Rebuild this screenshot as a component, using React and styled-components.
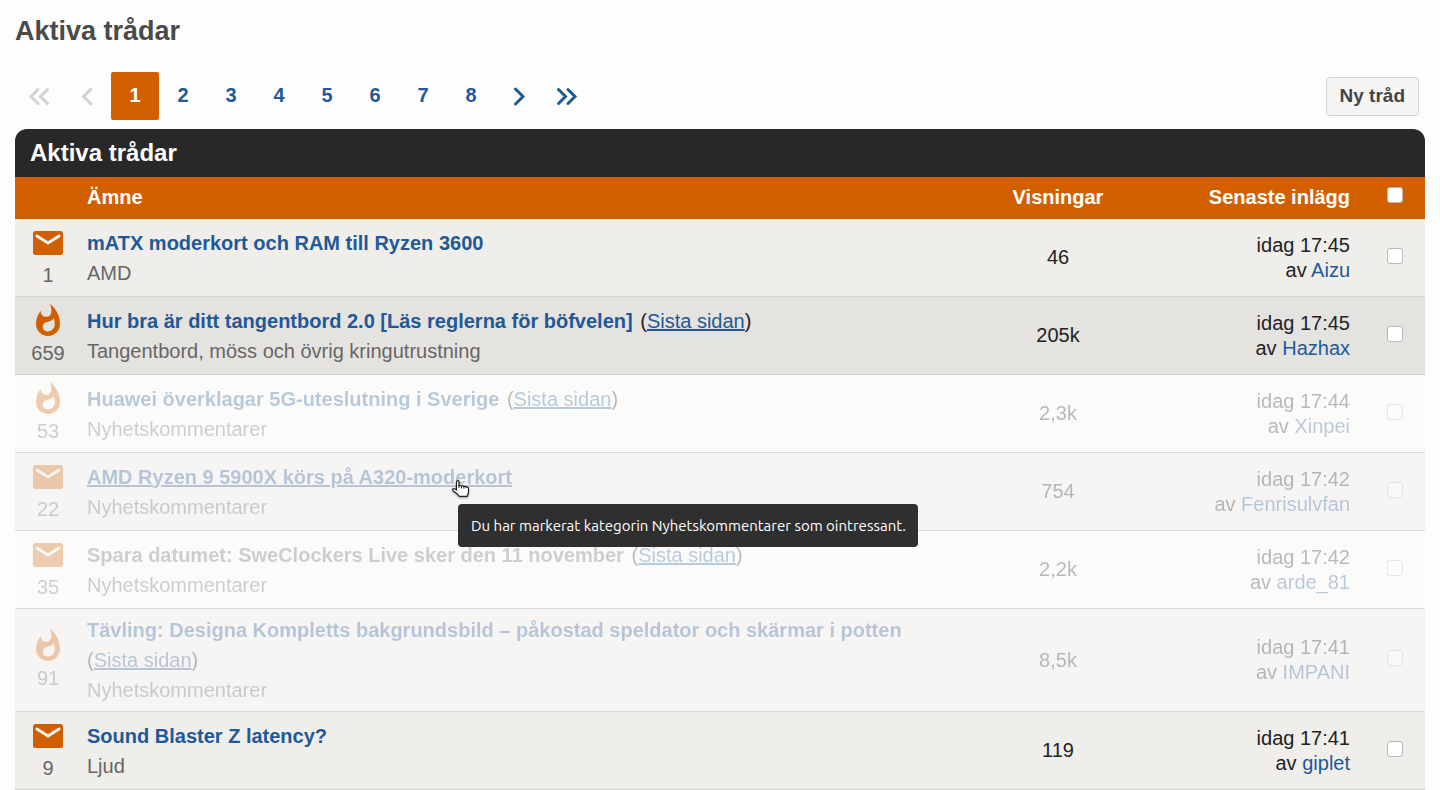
import React from 'react';
import styled, { createGlobalStyle, css } from 'styled-components';

const color = {
  orange: '#d15f00',
  blue: '#1f5998',
  dark: '#282828',
  text: '#222222',
  muted: '#666666',
};

const GlobalStyle = createGlobalStyle`
  *, *::before, *::after { box-sizing: border-box; }
  body {
    margin: 0;
    background: #fdfdfd;
    color: ${color.text};
    font: 20px/25px "Liberation Sans", Arial, Helvetica, sans-serif;
  }
`;

const Page = styled.main`
  padding: 0 15px;
`;

const PageTitle = styled.h1`
  margin: 0 0 10px;
  color: #4a4a4a;
  font-size: 27px;
  line-height: 62px;
`;

const Toolbar = styled.div`
  display: flex;
  align-items: center;
  justify-content: space-between;
  padding-right: 6px;
  margin-bottom: 9px;
`;

const Pagination = styled.nav`
  display: flex;
`;

const PageLink = styled.a`
  display: flex;
  align-items: center;
  justify-content: center;
  width: 48px;
  height: 48px;
  padding-bottom: 2px;
  border-radius: 2px;
  font-weight: bold;
  text-decoration: none;
  color: ${(p) => (p.$disabled ? '#d3d2d0' : p.$current ? '#ffffff' : color.blue)};
  background: ${(p) => (p.$current ? color.orange : 'transparent')};
`;

const NewThreadButton = styled.button`
  height: 39px;
  padding: 0 13px;
  border: 1px solid #d5d4d2;
  border-radius: 4px;
  background: #f7f5f4;
  color: #444444;
  font: bold 19px/24px "Liberation Sans", Arial, sans-serif;
  cursor: pointer;
`;

const Panel = styled.section`
  border-radius: 12px 12px 0 0;
  background: ${color.dark};
`;

const PanelTitle = styled.h2`
  margin: 0;
  padding: 0 15px;
  color: #ffffff;
  font-size: 24px;
  line-height: 48px;
`;

const ThreadTable = styled.table`
  width: 100%;
  table-layout: fixed;
  border-collapse: separate;
  border-spacing: 0;
`;

const HeadCell = styled.th`
  height: 42px;
  width: ${(p) => p.$width || 'auto'};
  padding: 0 ${(p) => p.$right || '0'} 2px ${(p) => p.$left || '0'};
  background: ${color.orange};
  color: #ffffff;
  text-align: ${(p) => p.$align || 'left'};
  vertical-align: middle;
`;

const rowBackground = {
  odd: '#f0eeeb',
  even: '#e5e3e0',
  oddFaded: '#fbfbf9',
  evenFaded: '#f7f5f4',
};

const Row = styled.tr`
  background: ${(p) => rowBackground[(p.$even ? 'even' : 'odd') + (p.$faded ? 'Faded' : '')]};
`;

const Cell = styled.td`
  position: relative;
  padding: 6px ${(p) => p.$right || '0'} 6px ${(p) => p.$left || '0'};
  border-bottom: 1px solid ${(p) => (p.$faded ? '#dadada' : '#d3d2cf')};
  text-align: ${(p) => p.$align || 'left'};
  vertical-align: middle;
`;

const CellBody = styled.div`
  ${(p) => p.$faded && css`opacity: 0.3;`}
`;

const StatusBody = styled(CellBody)`
  display: flex;
  flex-direction: column;
  align-items: center;
  color: ${color.muted};
  line-height: 29px;
`;

const TopicBody = styled(CellBody)`
  line-height: 30px;
`;

const TopicLink = styled.a`
  margin-right: 2px;
  color: ${(p) => (p.$visited ? color.muted : color.blue)};
  font-weight: bold;
  text-decoration: ${(p) => (p.$hovered ? 'underline' : 'none')};
`;

const LastPage = styled.span`
  white-space: nowrap;
  a { color: ${color.blue}; }
`;

const Category = styled.div`
  color: ${color.muted};
`;

const UserLink = styled.a`
  color: ${color.blue};
  text-decoration: none;
`;

const Checkbox = styled.input`
  appearance: none;
  display: block;
  width: 16px;
  height: 16px;
  margin: 0 auto 4px;
  border: 1px solid #b9b9b9;
  border-radius: 3px;
  background: #ffffff;
  &:checked { background: ${color.blue}; }
`;

const Tooltip = styled.div`
  position: absolute;
  z-index: 2;
  top: 51px;
  left: 377px;
  padding: 9px 12px 9px 13px;
  border-radius: 4px;
  background: rgba(34, 34, 34, 0.94);
  color: #ffffff;
  font: 15px/25px Ubuntu, "Noto Sans", sans-serif;
  white-space: nowrap;
`;

const Pointer = styled.svg`
  position: absolute;
  z-index: 3;
  top: 26px;
  left: 370px;
  filter: drop-shadow(0 1px 1px rgba(0, 0, 0, 0.35));
`;

const chevronPaths = {
  first: 'M11 5.5 4 12.5l7 7M20.500 5.500l-7 7 7 7',
  previous: 'M16 5l-7.500 7.500L16 20',
  next: 'M8.500 5l7.500 7.500L8.500 20',
  last: 'M3.500 5.500l7 7-7 7M13 5.500l7 7-7 7',
};

function Chevron({ kind }) {
  return (
    <svg width="24" height="24" viewBox="0 -1 24 24" fill="none" stroke="currentColor" strokeWidth="3" aria-hidden="true">
      <path d={chevronPaths[kind]} strokeLinecap="round" />
    </svg>
  );
}

function MailIcon() {
  return (
    <svg width="36" height="36" viewBox="0 0 36 36" aria-hidden="true">
      <rect x="3" y="6" width="30" height="24" rx="2.500" fill={color.orange} />
      <path d="M6.900 11 18 18l11.100-7" fill="none" stroke="#f7f5f3" strokeWidth="2.800" strokeLinecap="round" />
    </svg>
  );
}

function FireIcon() {
  return (
    <svg width="36" height="36" viewBox="0 0 24 24" fill={color.orange} aria-hidden="true">
      <path d="M13.5.67s.74 2.65.74 4.8c0 2.06-1.35 3.73-3.41 3.73-2.07 0-3.63-1.67-3.63-3.73l.03-.36C5.21 7.51 4 10.62 4 14c0 4.42 3.58 8 8 8s8-3.58 8-8C20 8.61 17.41 3.8 13.5.67zM11.71 19c-1.78 0-3.22-1.4-3.22-3.14 0-1.62 1.05-2.76 2.81-3.12 1.77-.36 3.6-1.21 4.62-2.58.39 1.29.59 2.65.59 4.04 0 2.65-2.15 4.8-4.8 4.8z" />
    </svg>
  );
}

function HandPointer() {
  return (
    <Pointer width="20" height="20" viewBox="0 0 20 20" aria-hidden="true">
      <path
        d="M5.500 2.500c0-1.300 2.500-1.300 2.500 0v4.300c.5-.7 2.300-.6 2.500.4.600-.7 2.200-.5 2.400.5.700-.6 2.100-.4 2.300.6.900-.5 2.300-.1 2.300 1.200v3.500c0 2-1 2.700-1.300 4.300H8.300C7.500 15.500 4.500 13.800 2 11.700.8 10.500 2.200 9 3.600 9.800l1.900 1.300z"
        fill="#ffffff"
        stroke="#222222"
        strokeWidth="1.200"
        strokeLinejoin="round"
      />
      <path d="M8 6.500v2.500M10.500 7.200v2.200M12.900 7.700v2" stroke="#222222" fill="none" />
    </Pointer>
  );
}

const threads = [
  { icon: 'mail', count: '1', title: 'mATX moderkort och RAM till Ryzen 3600', category: 'AMD', views: '46', time: '17:45', user: 'Aizu' },
  { icon: 'fire', count: '659', title: 'Hur bra är ditt tangentbord 2.0 [Läs reglerna för böfvelen]', lastPage: true, category: 'Tangentbord, möss och övrig kringutrustning', views: '205k', time: '17:45', user: 'Hazhax' },
  { icon: 'fire', count: '53', title: 'Huawei överklagar 5G-uteslutning i Sverige', lastPage: true, category: 'Nyhetskommentarer', views: '2,3k', time: '17:44', user: 'Xinpei', faded: true },
  { icon: 'mail', count: '22', title: 'AMD Ryzen 9 5900X körs på A320-moderkort', category: 'Nyhetskommentarer', views: '754', time: '17:42', user: 'Fenrisulvfan', faded: true, hovered: true },
  { icon: 'mail', count: '35', title: 'Spara datumet: SweClockers Live sker den 11 november', lastPage: true, category: 'Nyhetskommentarer', views: '2,2k', time: '17:42', user: 'arde_81', faded: true, visited: true },
  { icon: 'fire', count: '91', title: 'Tävling: Designa Kompletts bakgrundsbild – påkostad speldator och skärmar i potten', lastPage: true, category: 'Nyhetskommentarer', views: '8,5k', time: '17:41', user: 'IMPANI', faded: true },
  { icon: 'mail', count: '9', title: 'Sound Blaster Z latency?', category: 'Ljud', views: '119', time: '17:41', user: 'giplet' },
];

function ThreadRow({ thread, even }) {
  const faded = Boolean(thread.faded);
  return (
    <Row $even={even} $faded={faded}>
      <Cell $faded={faded}>
        <StatusBody $faded={faded}>
          {thread.icon === 'mail' ? <MailIcon /> : <FireIcon />}
          <span>{thread.count}</span>
        </StatusBody>
      </Cell>
      <Cell $faded={faded} $left="6px">
        <TopicBody $faded={faded}>
          <TopicLink href="#trad" $visited={thread.visited} $hovered={thread.hovered}>{thread.title}</TopicLink>
          {thread.lastPage && (
            <>
              {' '}
              <LastPage>(<a href="#sista">Sista sidan</a>)</LastPage>
            </>
          )}
          <Category>{thread.category}</Category>
        </TopicBody>
        {thread.hovered && (
          <>
            <HandPointer />
            <Tooltip role="tooltip">Du har markerat kategorin Nyhetskommentarer som ointressant.</Tooltip>
          </>
        )}
      </Cell>
      <Cell $faded={faded} $align="center">
        <CellBody $faded={faded}>{thread.views}</CellBody>
      </Cell>
      <Cell $faded={faded} $align="right" $right="15px">
        <CellBody $faded={faded}>
          <div>idag {thread.time}</div>
          <div>av <UserLink href="#profil">{thread.user}</UserLink></div>
        </CellBody>
      </Cell>
      <Cell $faded={faded} $align="center">
        <CellBody $faded={faded}>
          <Checkbox type="checkbox" aria-label={`Markera ${thread.title}`} />
        </CellBody>
      </Cell>
    </Row>
  );
}

export default function App() {
  return (
    <>
      <GlobalStyle />
      <Page>
        <PageTitle>Aktiva trådar</PageTitle>
        <Toolbar>
          <Pagination aria-label="Sidor">
            <PageLink $disabled aria-disabled="true" aria-label="Första sidan" href="#1"><Chevron kind="first" /></PageLink>
            <PageLink $disabled aria-disabled="true" aria-label="Föregående sida" href="#1"><Chevron kind="previous" /></PageLink>
            {[1, 2, 3, 4, 5, 6, 7, 8].map((n) => (
              <PageLink key={n} href={`#${n}`} $current={n === 1} aria-current={n === 1 ? 'page' : undefined}>{n}</PageLink>
            ))}
            <PageLink aria-label="Nästa sida" href="#2"><Chevron kind="next" /></PageLink>
            <PageLink aria-label="Sista sidan" href="#sista"><Chevron kind="last" /></PageLink>
          </Pagination>
          <NewThreadButton type="button">Ny tråd</NewThreadButton>
        </Toolbar>
        <Panel>
          <PanelTitle>Aktiva trådar</PanelTitle>
          <ThreadTable>
            <thead>
              <tr>
                <HeadCell $width="66px" aria-label="Status" />
                <HeadCell $left="6px">Ämne</HeadCell>
                <HeadCell $width="160px" $align="center">Visningar</HeadCell>
                <HeadCell $width="227px" $align="right" $right="15px">Senaste inlägg</HeadCell>
                <HeadCell $width="60px" $align="center">
                  <Checkbox type="checkbox" aria-label="Markera alla" />
                </HeadCell>
              </tr>
            </thead>
            <tbody>
              {threads.map((thread, i) => (
                <ThreadRow key={thread.title} thread={thread} even={i % 2 === 1} />
              ))}
            </tbody>
          </ThreadTable>
        </Panel>
      </Page>
    </>
  );
}
